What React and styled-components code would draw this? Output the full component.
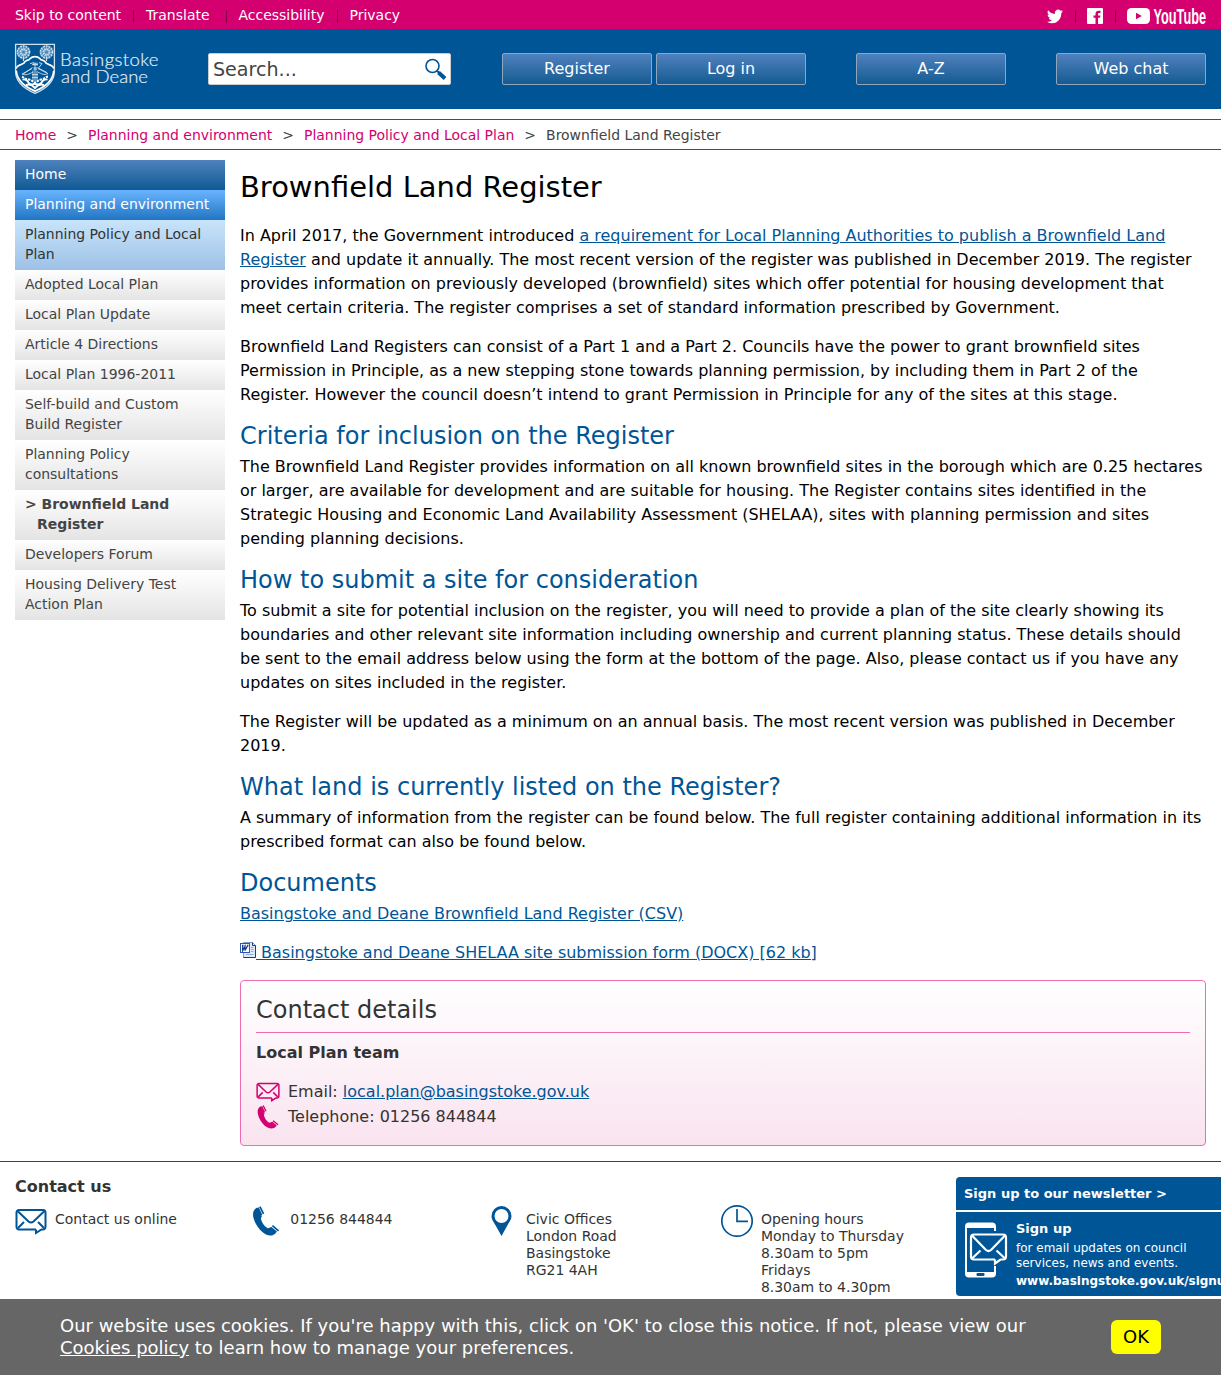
import React from 'react';
import styled, { createGlobalStyle, css } from 'styled-components';

const blue = '#005596';
const pink = '#d4006f';

const Global = createGlobalStyle`
  * { box-sizing: border-box; }
  body {
    margin: 0;
    background: #fff;
    color: #000;
    font: 15.993px/24px "DejaVu Sans", Verdana, sans-serif;
    overflow: hidden;
  }
  svg { display: block; flex: none; overflow: visible; }
  a { color: ${blue}; }
`;

const Page = styled.div`
  height: 1375px;
  overflow: hidden;
`;

const TopBar = styled.div`
  display: flex;
  justify-content: space-between;
  height: 29px;
  padding: 0 15px;
  background: ${pink};
  font-size: 13.98px;
  line-height: 30px;
`;

const TopLinks = styled.nav`
  display: flex;
`;

const TopLink = styled.a`
  color: #fff;
  text-decoration: none;
  padding-right: ${(p) => p.$gap || 12}px;
  & + & {
    padding-left: 13px;
    background: linear-gradient(#85004a, #85004a) left 10px / 1px 13px no-repeat;
  }
`;

const SocialLink = styled.a`
  display: flex;
  align-items: flex-start;
  padding: 8px ${(p) => (p.$last ? 0 : 12)}px 0 0;
  & + & {
    padding-left: ${(p) => (p.$last ? 12 : 13)}px;
    background: linear-gradient(#85004a, #85004a) left 10px / 1px 13px no-repeat;
  }
`;

const Header = styled.header`
  display: flex;
  height: 80px;
  padding: 14px 15px 0;
  background: ${blue};
`;

const Logo = styled.a`
  width: 193px;
`;

const Search = styled.div`
  display: flex;
  justify-content: space-between;
  width: 243px;
  height: 32px;
  margin: 10px 51px 0 0;
  padding: 0 2px 0 4px;
  border: 1px solid #ccc;
  border-radius: 2px;
  background: #fff;
  color: #444;
  font-size: 19.1px;
  line-height: 31px;
`;

const HeaderButton = styled.a`
  width: 150px;
  height: 32px;
  margin: 10px ${(p) => p.$gap || 0}px 0 0;
  border: 1px solid #8fa6bb;
  border-radius: 2px;
  background: linear-gradient(#4f81bd, #155b93);
  color: #fff;
  text-align: center;
  line-height: 30px;
  text-decoration: none;
`;

const Breadcrumb = styled.nav`
  display: flex;
  gap: 10px;
  height: 31px;
  margin-top: 10px;
  padding: 0 15px;
  border: solid ${pink};
  border-width: 1px 0;
  color: #444;
  font-size: 13.97px;
  line-height: 30px;
  a { color: ${pink}; text-decoration: none; }
`;

const Columns = styled.div`
  display: flex;
  gap: 15px;
  height: 1001px;
  padding: 0 15px;
  margin-top: 10px;
`;

const Side = styled.nav`
  width: 210px;
  flex: none;
`;

const tones = {
  home: css`background: linear-gradient(#4f81bd, #105a94); color: #fff;`,
  section: css`background: linear-gradient(#69b4ff, #2275c2); color: #fff;`,
  parent: css`background: linear-gradient(#c8e4fa, #9dc1e6); color: #333;`,
  plain: css`background: linear-gradient(#fff, #e4e4e4); color: #444;`,
  current: css`
    background: linear-gradient(#fff, #e4e4e4);
    color: #444;
    font-weight: bold;
    padding-left: 22px;
    text-indent: -12px;
  `,
};

const SideLink = styled.a`
  display: block;
  padding: 4px 10px 6px;
  font-size: 13.98px;
  line-height: 20px;
  text-decoration: none;
  ${(p) => tones[p.$tone]}
`;

const Main = styled.main`
  flex: 1;
  min-width: 0;
`;

const Title = styled.h1`
  margin: 10px 0 20px;
  font-size: 28.97px;
  font-weight: normal;
  line-height: 34px;
`;

const Heading = styled.h2`
  margin: 0 0 5px;
  color: ${(p) => (p.$dark ? '#333' : blue)};
  font-size: 24px;
  font-weight: normal;
  line-height: 28px;
`;

const Text = styled.p`
  margin: 0 0 15px;
  padding-right: 2px;
`;

const TeamName = styled.p`
  margin: 0 0 14px;
  font-weight: bold;
`;

const InlineIcon = styled.span`
  display: inline-block;
  vertical-align: 0;
  height: 16px;
`;

const ContactBox = styled.section`
  height: 166px;
  padding: 15px;
  border: 1px solid #ee6db1;
  border-radius: 4px;
  background: linear-gradient(#fff, #f9e3ef);
  color: #333;
`;

const ContactTitle = styled(Heading)`
  height: 37px;
  margin-bottom: 8px;
  border-bottom: 1px solid #ee6db1;
`;

const ContactRow = styled.div`
  display: flex;
  align-items: center;
  height: 25px;
  gap: 8px;
  white-space: pre;
`;

const Footer = styled.footer`
  display: flex;
  height: 214px;
  border-top: 1px solid ${blue};
  padding: 15px 0 0 15px;
  color: #333;
  font-size: 13.98px;
  line-height: 17px;
`;

const FooterContacts = styled.div`
  flex: none;
  width: 941px;
`;

const FooterTitle = styled.h2`
  margin: -2px 0 6px;
  font-size: 16px;
  line-height: 24px;
`;

const FooterGrid = styled.div`
  display: grid;
  grid-template-columns: repeat(4, 235.3px);
`;

const FooterItem = styled.div`
  display: flex;
  gap: ${(p) => p.$gap}px;
  padding-left: ${(p) => p.$left || 0}px;
`;

const FooterText = styled.div`
  padding-top: 6px;
`;

const Newsletter = styled.aside`
  flex: none;
  width: 285px;
  height: 119px;
  border-radius: 4px;
  overflow: hidden;
  background: ${blue};
  color: #fff;
`;

const NewsHead = styled.div`
  height: 35px;
  padding: 0 8px;
  border-bottom: 2px solid #fff;
  font-size: 13px;
  font-weight: bold;
  line-height: 33px;
`;

const NewsBody = styled.div`
  display: flex;
  gap: 8px;
  padding: 9px 8px;
  font-size: 11.99px;
  line-height: 15px;
`;

const NewsTitle = styled.div`
  margin-bottom: 5px;
  font-size: 13px;
  font-weight: bold;
`;

const NewsUrl = styled.div`
  margin-top: 3px;
  font-weight: bold;
`;

const CookieBar = styled.div`
  position: fixed;
  left: 0;
  right: 0;
  bottom: 0;
  display: flex;
  justify-content: space-between;
  height: 76px;
  padding: 16px 60px 0;
  background: #666;
  color: #fff;
  font-size: 17.99px;
  line-height: 22px;
  a { color: #fff; }
`;

const OkButton = styled.button`
  width: 50px;
  height: 34px;
  margin-top: 5px;
  padding: 0;
  border: 0;
  border-radius: 6px;
  background: #ff0;
  color: #000;
  font: inherit;
`;

function Envelope({ width, height, color }) {
  return (
    <svg width={width} height={height} viewBox="0 0 32 26" fill="none" stroke={color} strokeWidth="2">
      <path d="M21 21H4a2.500 2.500 0 0 1-2.500-2.500V4A2.500 2.500 0 0 1 4 1.500h24A2.500 2.500 0 0 1 30.500 4v14.500A2.500 2.500 0 0 1 28 21h-1.500L21 24.500V21" />
      <path d="M2.500 2.500l11 10.500q2.500 2 5 0l11-10.500M3 19.500l6-6M29 19.500l-6-6" />
    </svg>
  );
}

function Phone({ size, color }) {
  return (
    <svg width={size} height={size} viewBox="0 0 30 30">
      <path fill={color} d="M6.200 1.500C3 3 1.500 6 2.200 10.500c1.300 7 6.500 14.500 12.300 17.700 4.500 2.200 8 1.600 10.500-1.500l-6-5.500c-1 1-2.200 1.300-3.400.4-2.500-1.800-4.800-5.100-5.500-8.200-.2-1.700.3-2.800 1.100-3.400l-1.700-1z" />
      <path stroke={color} strokeWidth="1.700" d="M8.900.6l3.600 7.200M21.400 19.600l6.200 5.200" />
      <path stroke={color} strokeWidth="2" d="M6.800 1.800l3.600 7.400M19.500 21.500l5.800 4.800" />
    </svg>
  );
}

function Crest() {
  const rays = Array.from({ length: 12 }, (_, i) => i * 30);
  const tree = (cx) => (
    <g>
      <circle cx={cx} cy="8.500" r="3.500" strokeWidth="7" strokeOpacity=".35" />
      <circle cx={cx} cy="8.500" r="6" strokeDasharray="1.600 1.100" strokeWidth="1.500" />
      <circle cx={cx} cy="8.500" r="3" strokeDasharray="1.500 .8" strokeWidth="1.500" />
      {rays.map((a) => (
        <path key={a} strokeWidth=".5" d={`M${cx} 7v-5`} transform={`rotate(${a} ${cx} 8.500)`} />
      ))}
      <path strokeWidth="1.200" d={`M${cx} 13v4.500`} />
    </g>
  );
  return (
    <g fill="none" stroke="#cfe1ef" transform="translate(0 .6)">
      <path d="M.6 .8h38.800v27c0 10-8 17-19.400 22C8.500 45 .6 38 .6 28z" strokeWidth="1.300" />
      {tree(8.500)}
      {tree(31.500)}
      <path stroke="#fff" strokeWidth="1.700" d="M1 25c1-3 2-3 5-4 2-1 3-1 4-3 2-2 4-1 5-3 2-2 3-2 5-2s3 0 5 2c1 2 3 1 5 3 1 2 2 2 4 3 3 1 4 1 5 4" />
      <path stroke="#fff" strokeWidth="1.700" d="M1.200 27c1 10 8 16 18.800 20.500C31 43 38 37 38.800 27" />
      <path strokeWidth=".9" d="M20 19v22M17 21h6M17.500 24L8 30.500M22.500 24L32 29M17 25l-10 5.500c4 1.500 7 0 11-2M23 25l10 5c-4 2-7 0-10-1.500M18 27v10M22 27v10M15 20l4-1M24 19l3 1-4 5M17 31h6M17 34h6" />
      <path strokeWidth="2.600" strokeOpacity=".6" d="M18 20.500h5M18.500 25h3.500" />
      <path stroke="#fff" strokeWidth="2" strokeDasharray="2.400 .9" d="M7 33c2 1 4 3 7 3s4 3 6 3 3-3 6-3 5-3 7-3" />
      <path stroke="#fff" strokeWidth="1.800" d="M7.500 36q4-1 6 3 3 3 6 1 4 2 7-1 2-4 6-3M11 41.500q5-2 9 3 4-5 9-3" />
    </g>
  );
}

const LogoMark = () => (
  <svg width="146" height="52" viewBox="0 0 146 52">
    <Crest />
    <g fill="#e3eef6" stroke="#e3eef6" strokeWidth=".2" fontFamily="Lato, sans-serif" fontSize="18.500" fontWeight="300">
      <text x="45" y="22.500" textLength="98.500">Basingstoke</text>
      <text x="46" y="40" textLength="87">and Deane</text>
    </g>
  </svg>
);

const WordIcon = () => (
  <svg width="16" height="16" viewBox="0 0 16 16">
    <path d="M3.500.5h9l3 3v12h-12z" fill="#dfe9fb" stroke="#7f9ad0" />
    <path d="M12.500 .5v3h3M15.500 3.500v12h-12" fill="none" stroke="#253b6e" />
    <path d="M11 5.500h2.500M11 7.500h2.500M11 9.500h2.500M6 12.500h7.500" stroke="#8aa7df" />
    <rect x=".5" y="1.500" width="9" height="9" fill="#fff" stroke="#2b57b5" />
    <path d="M2 3.500h1.500M2.700 3.500v5l2.300-4v4l2.700-5M4.500 3.500h1.200M7 3.500h1.500" fill="none" stroke="#173a91" strokeWidth="1.300" />
  </svg>
);

const MENU = [
  ['home', 'Home'],
  ['section', 'Planning and environment'],
  ['parent', 'Planning Policy and Local Plan'],
  ['plain', 'Adopted Local Plan'],
  ['plain', 'Local Plan Update'],
  ['plain', 'Article 4 Directions'],
  ['plain', 'Local Plan 1996-2011'],
  ['plain', 'Self-build and Custom Build Register'],
  ['plain', 'Planning Policy consultations'],
  ['current', '> Brownfield Land Register'],
  ['plain', 'Developers Forum'],
  ['plain', 'Housing Delivery Test Action Plan'],
];

export default function App() {
  return (
    <Page>
      <Global />
      <TopBar>
        <TopLinks>
          <TopLink>Skip to content</TopLink>
          <TopLink $gap={16}>Translate</TopLink>
          <TopLink>Accessibility</TopLink>
          <TopLink>Privacy</TopLink>
        </TopLinks>
        <TopLinks>
          <SocialLink>
            <svg width="16" height="17" viewBox="0 0 24 24" preserveAspectRatio="none" fill="#fff">
              <path d="M24 4.600a10 10 0 0 1-2.800.8 5 5 0 0 0 2.100-2.700 10 10 0 0 1-3.100 1.200 4.900 4.900 0 0 0-8.400 4.500A14 14 0 0 1 1.700 3.200a4.900 4.900 0 0 0 1.500 6.500 5 5 0 0 1-2.200-.6 4.900 4.900 0 0 0 3.900 4.900 5 5 0 0 1-2.200.1 4.900 4.900 0 0 0 4.600 3.400A9.900 9.900 0 0 1 0 19.500a14 14 0 0 0 7.500 2.200c9.100 0 14.300-7.700 14-14.600A10 10 0 0 0 24 4.600z" />
            </svg>
          </SocialLink>
          <SocialLink>
            <svg width="16" height="16" viewBox="0 0 16 16">
              <rect width="16" height="16" rx="1" fill="#fff" />
              <path fill={pink} d="M8.500 16V9.800h-2V7.500h2V6c0-2.200 1.200-3.300 3.200-3.300h1.800v2.200h-1.200c-1 0-1.300.5-1.300 1.300v1.300h2.400l-.3 2.300H11V16z" />
            </svg>
          </SocialLink>
          <SocialLink $last>
            <svg width="79" height="18" viewBox="0 0 79 18">
              <rect width="23" height="16" rx="4.500" fill="#fff" />
              <path d="M9 4.700v6.600L14.800 8z" fill={pink} />
              <text x="26.500" y="15.800" textLength="52.500" lengthAdjust="spacingAndGlyphs" fill="#fff" fontFamily="Liberation Sans, sans-serif" fontWeight="bold" fontSize="21.500">YouTube</text>
            </svg>
          </SocialLink>
        </TopLinks>
      </TopBar>
      <Header>
        <Logo><LogoMark /></Logo>
        <Search>
          Search...
          <svg width="24" height="30" viewBox="0 -1 24 30" fill="none" stroke={blue}>
            <circle cx="8.500" cy="11" r="6.500" strokeWidth="1.600" />
            <path d="M13 16l2.500 2" strokeWidth="2" />
            <path d="M14.500 17.500l6.500 6" strokeWidth="4" />
          </svg>
        </Search>
        <HeaderButton $gap={4}>Register</HeaderButton>
        <HeaderButton $gap={50}>Log in</HeaderButton>
        <HeaderButton $gap={50}>A-Z</HeaderButton>
        <HeaderButton>Web chat</HeaderButton>
      </Header>
      <Breadcrumb>
        <a>Home</a><span>&gt;</span>
        <a>Planning and environment</a><span>&gt;</span>
        <a>Planning Policy and Local Plan</a><span>&gt;</span>
        <span>Brownfield Land Register</span>
      </Breadcrumb>
      <Columns>
        <Side>
          {MENU.map(([tone, label]) => (
            <SideLink key={label} $tone={tone}>{label}</SideLink>
          ))}
        </Side>
        <Main>
          <Title>Brownfield Land Register</Title>
          <Text>
            In April 2017, the Government introduced <a href="#req">a requirement for Local Planning Authorities to publish a Brownfield Land Register</a> and update it annually. The most recent version of the register was published in December 2019. The register provides information on previously developed (brownfield) sites which offer potential for housing development that meet certain criteria. The register comprises a set of standard information prescribed by Government.
          </Text>
          <Text>
            Brownfield Land Registers can consist of a Part 1 and a Part 2. Councils have the power to grant brownfield sites Permission in Principle, as a new stepping stone towards planning permission, by including them in Part 2 of the Register. However the council doesn’t intend to grant Permission in Principle for any of the sites at this stage.
          </Text>
          <Heading>Criteria for inclusion on the Register</Heading>
          <Text>
            The Brownfield Land Register provides information on all known brownfield sites in the borough which are 0.25 hectares or larger, are available for development and are suitable for housing. The Register contains sites identified in the Strategic Housing and Economic Land Availability Assessment (SHELAA), sites with planning permission and sites pending planning decisions.
          </Text>
          <Heading>How to submit a site for consideration</Heading>
          <Text>
            To submit a site for potential inclusion on the register, you will need to provide a plan of the site clearly showing its boundaries and other relevant site information including ownership and current planning status. These details should be sent to the email address below using the form at the bottom of the page. Also, please contact us if you have any updates on sites included in the register.
          </Text>
          <Text>
            The Register will be updated as a minimum on an annual basis. The most recent version was published in December 2019.
          </Text>
          <Heading>What land is currently listed on the Register?</Heading>
          <Text>
            A summary of information from the register can be found below. The full register containing additional information in its prescribed format can also be found below.
          </Text>
          <Heading>Documents</Heading>
          <Text><a href="#csv">Basingstoke and Deane Brownfield Land Register (CSV)</a></Text>
          <Text>
            <a href="#docx"><InlineIcon><WordIcon /></InlineIcon> Basingstoke and Deane SHELAA site submission form (DOCX) [62 kb]</a>
          </Text>
          <ContactBox>
            <ContactTitle $dark>Contact details</ContactTitle>
            <TeamName>Local Plan team</TeamName>
            <ContactRow>
              <Envelope width={24} height={20} color={pink} />
              <span>Email: <a href="#mail">local.plan@basingstoke.gov.uk</a></span>
            </ContactRow>
            <ContactRow>
              <Phone size={24} color={pink} />
              <span>Telephone: 01256 844844</span>
            </ContactRow>
          </ContactBox>
        </Main>
      </Columns>
      <Footer>
        <FooterContacts>
          <FooterTitle>Contact us</FooterTitle>
          <FooterGrid>
            <FooterItem $gap={8}>
              <svg width="32" height="30" viewBox="0 -3.500 32 30"><Envelope width={32} height={26} color={blue} /></svg>
              <FooterText>Contact us online</FooterText>
            </FooterItem>
            <FooterItem $gap={8} $left={1}>
              <svg width="31" height="32" viewBox="0 -1 31 32"><Phone size={30} color={blue} /></svg>
              <FooterText>01256 844844</FooterText>
            </FooterItem>
            <FooterItem $gap={13.6} $left={5.8}>
              <svg width="21" height="32" viewBox="0 0 21 32">
                <path fill={blue} fillRule="evenodd" d="M10.500 1a10 10 0 0 1 10 10c0 4-3 7-5 11l-5 9-5-9c-2-4-5-7-5-11a10 10 0 0 1 10-10zm0 3a7 7 0 1 0 0 14 7 7 0 0 0 0-14z" />
              </svg>
              <FooterText>Civic Offices<br />London Road<br />Basingstoke<br />RG21 4AH</FooterText>
            </FooterItem>
            <FooterItem $gap={8}>
              <svg width="32" height="32" viewBox="0 0 32 32" fill="none" stroke={blue}>
                <circle cx="16" cy="16" r="15.200" strokeWidth="1.700" />
                <path d="M16 4v12.300h11" strokeWidth="1.700" />
              </svg>
              <FooterText>Opening hours<br />Monday to Thursday<br />8.30am to 5pm<br />Fridays<br />8.30am to 4.30pm</FooterText>
            </FooterItem>
          </FooterGrid>
        </FooterContacts>
        <Newsletter>
          <NewsHead>Sign up to our newsletter &gt;</NewsHead>
          <NewsBody>
            <svg width="44" height="58" viewBox="0 0 44 58" fill="none" stroke="#fff">
              <path fill="#fff" stroke="none" d="M1 7V5.500a4 4 0 0 1 4-4h23a4 4 0 0 1 4 4V7zM1 51h31v1.500a4 4 0 0 1-4 4H5a4 4 0 0 1-4-4z" />
              <path strokeWidth="2" d="M2 5v48M31 5v5M31 45v8" />
              <rect x="12.500" y="52" width="8" height="3" rx="1" fill={blue} stroke="none" />
              <path strokeWidth="2.200" fill={blue} d="M31 38.500H10a3 3 0 0 1-3-3v-19a3 3 0 0 1 3-3h29a3 3 0 0 1 3 3v19a3 3 0 0 1-3 3h-2.500L31 42.500v-4" />
              <path strokeWidth="2.200" d="M8 14.500l14 14.500q2.500 2 5 0l14-14.500M8.500 37l8-7.500M40.500 37l-8-7.500" />
            </svg>
            <div>
              <NewsTitle>Sign up</NewsTitle>
              for email updates on council<br />services, news and events.
              <NewsUrl>www.basingstoke.gov.uk/signup</NewsUrl>
            </div>
          </NewsBody>
        </Newsletter>
      </Footer>
      <CookieBar>
        <div>
          Our website uses cookies. If you're happy with this, click on 'OK' to close this notice. If not, please view our<br />
          <a href="#cookies">Cookies policy</a> to learn how to manage your preferences.
        </div>
        <OkButton>OK</OkButton>
      </CookieBar>
    </Page>
  );
}
